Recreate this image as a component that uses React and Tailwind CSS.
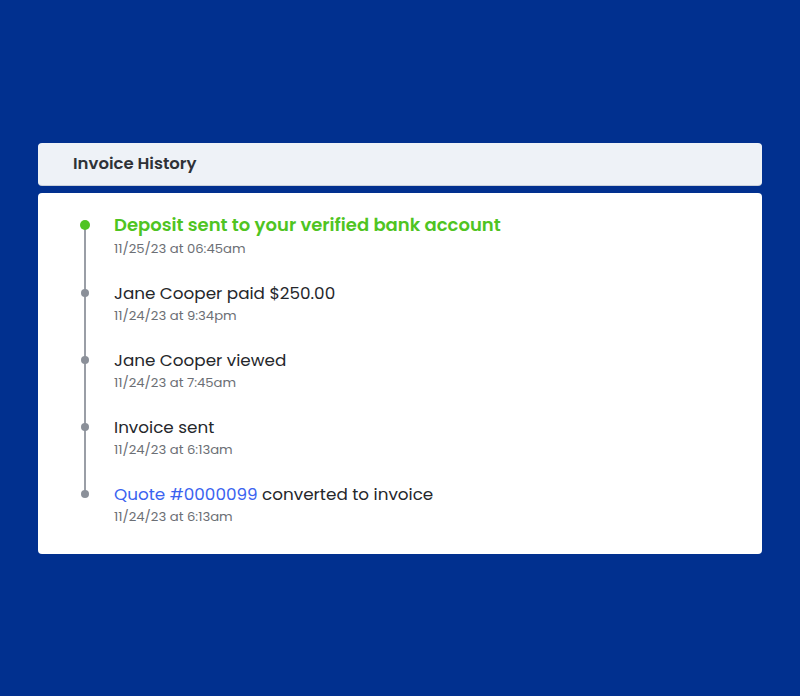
import React from 'react';

const events = [
  { title: 'Deposit sent to your verified bank account', time: '11/25/23 at 06:45am', active: true },
  { title: 'Jane Cooper paid $250.00', time: '11/24/23 at 9:34pm' },
  { title: 'Jane Cooper viewed', time: '11/24/23 at 7:45am' },
  { title: 'Invoice sent', time: '11/24/23 at 6:13am' },
  { link: 'Quote #0000099', title: ' converted to invoice', time: '11/24/23 at 6:13am' },
];

const App = () => {
  return (
    <div
      className="min-h-[696px] w-full bg-[#01308f] px-[38px] pt-[143px]"
      style={{ fontFamily: '"Poppins", "Open Sans", "Noto Sans", sans-serif' }}
    >
      {/* Header */}
      <div className="flex h-[42px] items-center rounded-[4px] bg-[#eef2f7] pl-[35px] shadow-[0_1px_0_#c9d0da]">
        <h2 className="pt-[1px] text-[16.5px] font-semibold text-[#2f3237]">Invoice History</h2>
      </div>

      {/* Timeline */}
      <div className="relative mt-[8px] rounded-[4px] bg-white pl-[42px] pt-[20px] pb-[27px]">
        <div className="absolute left-[46px] top-[32px] h-[271px] w-[2px] bg-[#9a9ea6]" />
        <ul className="flex flex-col gap-[21px]">
          {events.map((ev, i) => (
            <li key={i} className="flex items-start">
              <div className="flex h-[24px] w-[10px] items-center justify-center">
                <span
                  className={
                    ev.active
                      ? 'relative h-[10px] w-[10px] rounded-full bg-[#4fc422]'
                      : 'relative mt-[2px] h-[8px] w-[8px] rounded-full bg-[#8b9099]'
                  }
                />
              </div>
              <div className="ml-[24px]">
                <p
                  className={
                    ev.active
                      ? 'text-[18px] leading-[24px] font-semibold text-[#4fc422]'
                      : 'relative top-[1px] text-[16.8px] leading-[24px] font-normal text-[#25272b]'
                  }
                >
                  {ev.link && <span className="text-[#3b63f0]">{ev.link}</span>}
                  {ev.title}
                </p>
                <p className="mt-[2px] text-[13.2px] leading-[20px] text-[#6c6f75]">{ev.time}</p>
              </div>
            </li>
          ))}
        </ul>
      </div>
    </div>
  );
};

export default App;
